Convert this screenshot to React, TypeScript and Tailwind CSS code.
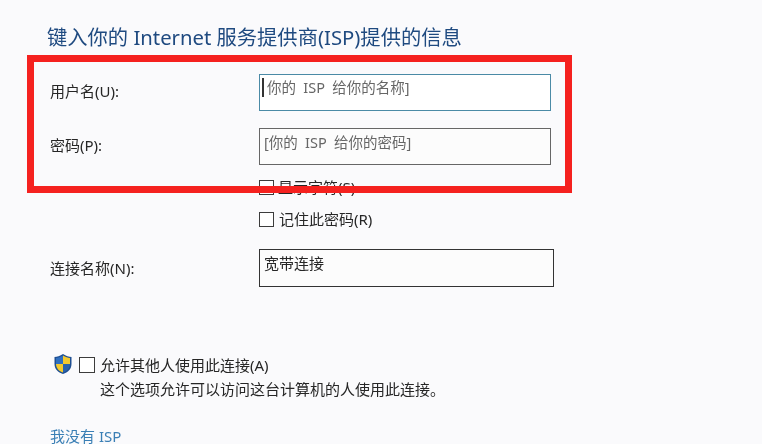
const font = "font-['Noto_Sans','Noto_Sans_CJK_SC',sans-serif]"

function Shield() {
  return (
    <svg width="20" height="22" viewBox="0 0 20 22" className="shrink-0">
      <path d="M10 1 C7 3 4 4 1.5 4 V11 C1.5 16 5 19.5 10 21 C15 19.5 18.5 16 18.5 11 V4 C16 4 13 3 10 1 Z" fill="#1f4f92" />
      <path d="M10 2.5 C12.5 4 15 5 17 5 V11 H10 Z" fill="#f3c92e" />
      <path d="M10 11 H3 C3.2 15.5 6 18.3 10 19.5 Z" fill="#f3c92e" />
      <path d="M10 2.5 C7.5 4 5 5 3 5 V11 H10 Z" fill="#2f6fc0" />
      <path d="M10 11 H17 C16.8 15.5 14 18.3 10 19.5 Z" fill="#2a62ad" />
    </svg>
  )
}

function Checkbox({ size = 'w-[15px] h-[15px]' }: { size?: string }) {
  return <span className={`${size} shrink-0 border-[1.5px] border-[#3c3c3c] bg-white`} />
}

export default function App() {
  return (
    <div className={`${font} relative w-[762px] h-[444px] overflow-hidden bg-[#fafafc] text-[#262626] blur-[0.5px]`}>
      <h1 className="pl-[47px] pt-[25px] h-[48px] text-[20.3px] leading-[24px] font-normal text-[#1f4a80] whitespace-nowrap">
        键入你的 Internet 服务提供商(ISP)提供的信息
      </h1>

      <div className="pl-[50px] mt-[26px] text-[15px]">
        <div className="flex items-center h-[37px]">
          <label className="w-[209px] pb-[3px]">用户名(U):</label>
          <div className="w-[292px] h-[37px] border-[1.5px] border-[#4a8aa6] bg-white pl-[2px] flex items-start text-[#666] text-[14.5px] leading-[25px] whitespace-nowrap [word-spacing:3.5px]">
            <span className="w-[2px] h-[19px] mt-[3px] bg-[#333] shrink-0" />
            <span className="ml-[3px]">你的 ISP 给你的名称]</span>
          </div>
        </div>

        <div className="flex items-center h-[37px] mt-[17px]">
          <label className="w-[209px] pb-[3px]">密码(P):</label>
          <div className="w-[292px] h-[37px] border-[1.5px] border-[#666] bg-[#fcfcfc] pl-[4px] text-[#666] text-[14.5px] leading-[26px] whitespace-nowrap [word-spacing:3.5px]">
            [你的 ISP 给你的密码]
          </div>
        </div>

        <div className="flex items-center gap-[4px] h-[15px] mt-[15px] ml-[209px]">
          <Checkbox />
          <span>显示字符(S)</span>
        </div>

        <div className="flex items-center gap-[5px] h-[15px] mt-[17px] ml-[209px]">
          <Checkbox />
          <span>记住此密码(R)</span>
        </div>

        <div className="flex items-center h-[38px] mt-[22px]">
          <label className="w-[209px]">连接名称(N):</label>
          <div className="w-[295px] h-[38px] border-[1.5px] border-[#333] bg-[#fcfcfc] pl-[4px] leading-[27px]">宽带连接</div>
        </div>

        <div className="flex mt-[66px] ml-[3px]">
          <Shield />
          <div className="ml-[6px] mt-[4px]">
            <div className="flex items-center gap-[5px] h-[16px]">
              <Checkbox size="w-[16px] h-[16px]" />
              <span className="whitespace-nowrap">允许其他人使用此连接(A)</span>
            </div>
            <p className="ml-[21px] mt-[6px] leading-[20px] whitespace-nowrap">这个选项允许可以访问这台计算机的人使用此连接。</p>
          </div>
        </div>

        <a className="block mt-[27px] text-[#3a7fb5] leading-[20px]">我没有 ISP</a>
      </div>

      <div className="absolute left-[27px] top-[55px] w-[545px] h-[138px] border-[7px] border-[#f5211f]" />
    </div>
  )
}
